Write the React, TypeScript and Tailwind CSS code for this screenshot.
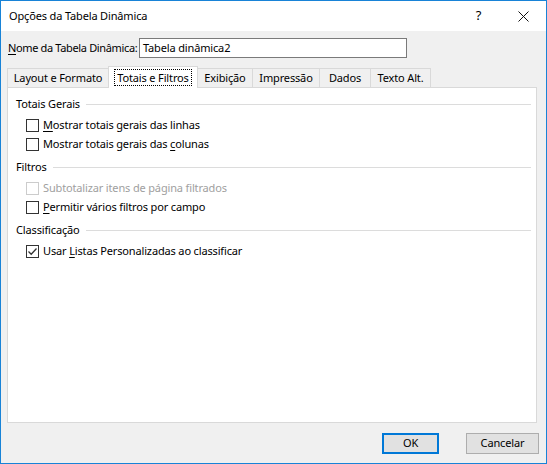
import React from "react";

// Single accelerator-underlined letter inside a label
const Acc: React.FC<{ children: React.ReactNode }> = ({ children }) => (
  <span className="underline underline-offset-2">{children}</span>
);

const Checkbox: React.FC<{ checked?: boolean; disabled?: boolean }> = ({ checked, disabled }) => (
  <span
    className={`w-[13px] h-[13px] shrink-0 border bg-white flex items-center justify-center ${
      disabled ? "border-[#cccccc]" : "border-[#333333]"
    }`}
  >
    {checked && (
      <svg width="11" height="11" viewBox="0 0 11 11">
        <path d="M1.5 5.5 L4.2 8.2 L9.5 2.5" fill="none" stroke="#333" strokeWidth="1.3" />
      </svg>
    )}
  </span>
);

const Option: React.FC<{ checked?: boolean; disabled?: boolean; children: React.ReactNode }> = ({
  checked,
  disabled,
  children,
}) => (
  <div className="h-[19px] flex items-center pl-[10px] gap-[4px]">
    <Checkbox checked={checked} disabled={disabled} />
    <span className={disabled ? "text-[#a0a0a0]" : "text-black"}>{children}</span>
  </div>
);

const Section: React.FC<{ title: string; first?: boolean; children: React.ReactNode }> = ({
  title,
  first,
  children,
}) => (
  <div className={first ? "" : "mt-[4px]"}>
    <div className="h-[18px] flex items-center gap-[6px] pr-[5px]">
      <span>{title}</span>
      <div className="flex-1 h-px bg-[#dcdcdc]" />
    </div>
    <div className="mt-[3px] flex flex-col">{children}</div>
  </div>
);

const tabs = ["Layout e Formato", "Totais e Filtros", "Exibição", "Impressão", "Dados", "Texto Alt."];
const tabWidths = ["w-[102px]", "w-[90px]", "w-[56px]", "w-[68px]", "w-[52px]", "w-[61px]"];

export default function App() {
  return (
    <div className="w-[547px] h-[464px] border border-[#1883d7] bg-[#f0f0f0] flex flex-col text-[11px] tracking-[-0.15px] text-black whitespace-nowrap font-['Noto_Sans',sans-serif] overflow-hidden">
      {/* title bar */}
      <div className="h-[30px] bg-white flex items-center shrink-0">
        <span className="pl-[8px] flex-1">Opções da Tabela Dinâmica</span>
        <div className="w-[45px] h-full flex items-center justify-center text-[13px]">?</div>
        <div className="w-[45px] h-full flex items-center justify-center">
          <svg width="11" height="11" viewBox="0 0 11 11">
            <path d="M0.5 0.5 L10.5 10.5 M10.5 0.5 L0.5 10.5" stroke="#111" strokeWidth="1" />
          </svg>
        </div>
      </div>

      {/* name row */}
      <div className="mt-[7px] h-[20px] flex items-center pl-[7px]">
        <span className="w-[131px] shrink-0 tracking-[-0.35px]">
          <Acc>N</Acc>ome da Tabela Dinâmica:
        </span>
        <div className="w-[268px] h-[20px] shrink-0 bg-white border border-[#7a7a7a] flex items-center pl-[3px]">
          Tabela dinâmica2
        </div>
      </div>

      {/* tabs */}
      <div className="mt-[8px] h-[21px] flex items-end pl-[6px]">
        {tabs.map((t, i) =>
          i === 1 ? (
            <div
              key={t}
              className={`${tabWidths[i]} shrink-0 h-[22px] -mb-px -ml-px relative z-10 bg-white border border-b-0 border-[#d9d9d9] flex items-center justify-center`}
            >
              <span className="outline outline-1 outline-dotted outline-black px-[2px] leading-[15px]">{t}</span>
            </div>
          ) : (
            <div
              key={t}
              className={`${tabWidths[i]} shrink-0 h-[19px] bg-[#f0f0f0] border border-b-0 border-[#d9d9d9] flex items-center justify-center ${
                i > 1 ? "-ml-px" : ""
              }`}
            >
              {t}
            </div>
          )
        )}
      </div>

      {/* panel */}
      <div className="ml-[6px] mr-[9px] h-[336px] bg-white border border-[#d9d9d9] pl-[8px] pt-[7px] flex flex-col">
        <Section title="Totais Gerais" first>
          <Option>
            <Acc>M</Acc>ostrar totais gerais das linhas
          </Option>
          <Option>
            Mostrar totais gerais das <Acc>c</Acc>olunas
          </Option>
        </Section>
        <Section title="Filtros">
          <Option disabled>Subtotalizar itens de página filtrados</Option>
          <Option>
            <Acc>P</Acc>ermitir vários filtros por campo
          </Option>
        </Section>
        <Section title="Classificação">
          <Option checked>
            Usar <Acc>L</Acc>istas Personalizadas ao classificar
          </Option>
        </Section>
      </div>

      {/* buttons */}
      <div className="mt-[10px] flex justify-end gap-[27px] pr-[7px]">
        <button className="w-[57px] h-[21px] bg-[#e1e1e1] border-2 border-[#0078d7] flex items-center justify-center">
          OK
        </button>
        <button className="w-[73px] h-[21px] bg-[#e1e1e1] border border-[#adadad] flex items-center justify-center">
          Cancelar
        </button>
      </div>
    </div>
  );
}
